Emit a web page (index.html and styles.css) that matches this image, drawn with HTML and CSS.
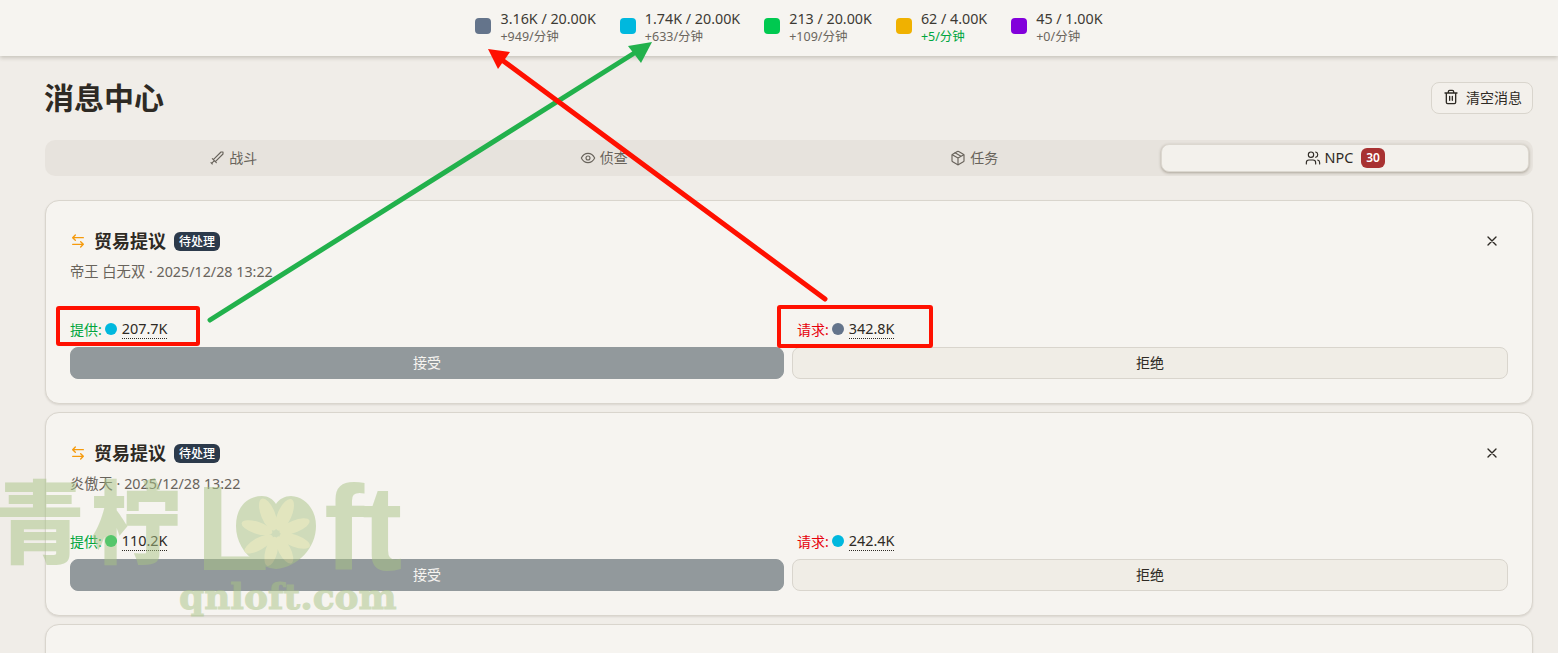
FILE: index.html
```html
<!DOCTYPE html>
<html lang="zh">
<head>
<meta charset="utf-8">
<title>消息中心</title>
<link rel="stylesheet" href="styles.css">
</head>
<body>
<div class="wrap">
	<header class="topbar">
		<div class="res">
			<i class="dot slate"></i>
			<div><p class="res-num">3.16K / 20.00K</p><p class="res-rate">+949/分钟</p></div>
		</div>
		<div class="res">
			<i class="dot cyan"></i>
			<div><p class="res-num">1.74K / 20.00K</p><p class="res-rate">+633/分钟</p></div>
		</div>
		<div class="res">
			<i class="dot green"></i>
			<div><p class="res-num">213 / 20.00K</p><p class="res-rate">+109/分钟</p></div>
		</div>
		<div class="res">
			<i class="dot amber"></i>
			<div><p class="res-num">62 / 4.00K</p><p class="res-rate up">+5/分钟</p></div>
		</div>
		<div class="res">
			<i class="dot purple"></i>
			<div><p class="res-num">45 / 1.00K</p><p class="res-rate">+0/分钟</p></div>
		</div>
	</header>

	<main class="page">
		<div class="page-head">
			<h1>消息中心</h1>
			<a href="" class="clear-btn">
				<svg class="ico" viewBox="0 0 24 24"><path d="M3 6h18M19 6v14a2 2 0 0 1-2 2H7a2 2 0 0 1-2-2V6M8 6V4a2 2 0 0 1 2-2h4a2 2 0 0 1 2 2v2M10 11v6M14 11v6"/></svg>
				清空消息
			</a>
		</div>

		<nav class="tabs">
			<a href="" class="tab">
				<svg class="ico-sm" viewBox="0 0 24 24"><g transform="matrix(-1 0 0 1 24 0)"><path d="M14.5 17.5 3 6V3h3l11.5 11.5M13 19l6-6M16 16l4 4M19 21l2-2"/></g></svg>
				战斗
			</a>
			<a href="" class="tab">
				<svg class="ico-sm" viewBox="0 0 24 24"><path d="M2 12s3.5-7 10-7 10 7 10 7-3.5 7-10 7-10-7-10-7Z"/><circle cx="12" cy="12" r="3"/></svg>
				侦查
			</a>
			<a href="" class="tab">
				<svg class="ico-sm" viewBox="0 0 24 24"><path d="M21 8a2 2 0 0 0-1-1.7l-7-4a2 2 0 0 0-2 0l-7 4A2 2 0 0 0 3 8v8a2 2 0 0 0 1 1.7l7 4a2 2 0 0 0 2 0l7-4a2 2 0 0 0 1-1.7Z"/><path d="m3.3 7 8.7 5 8.7-5M12 22V12M7.5 4.3l9 5.1"/></svg>
				任务
			</a>
			<a href="" class="tab active">
				<svg class="ico-sm" viewBox="0 0 24 24"><path d="M16 21v-2a4 4 0 0 0-4-4H6a4 4 0 0 0-4 4v2"/><circle cx="9" cy="7" r="4"/><path d="M22 21v-2a4 4 0 0 0-3-3.9M16 3.1a4 4 0 0 1 0 7.8"/></svg>
				NPC <span class="count">30</span>
			</a>
		</nav>

		<section class="card">
			<div class="card-top">
				<div>
					<h2>
						<svg class="swap" viewBox="0 0 24 24"><path d="M8 3 4 7l4 4M4 7h16M16 21l4-4-4-4M20 17H4"/></svg>
						贸易提议 <span class="tag">待处理</span>
					</h2>
					<p class="meta">帝王 白无双 · 2025/12/28 13:22</p>
				</div>
				<a href="" class="close"><svg class="ico" viewBox="0 0 24 24"><path d="M18 6 6 18M6 6l12 12"/></svg></a>
			</div>
			<div class="deal">
				<div class="side"><span class="give">提供:</span><i class="dot-sm cyan"></i><span class="amt">207.7K</span></div>
				<div class="side right"><span class="want">请求:</span><i class="dot-sm slate"></i><span class="amt">342.8K</span></div>
				<a href="" class="btn accept">接受</a>
				<a href="" class="btn">拒绝</a>
			</div>
		</section>

		<section class="card">
			<div class="card-top">
				<div>
					<h2>
						<svg class="swap" viewBox="0 0 24 24"><path d="M8 3 4 7l4 4M4 7h16M16 21l4-4-4-4M20 17H4"/></svg>
						贸易提议 <span class="tag">待处理</span>
					</h2>
					<p class="meta">炎傲天 · 2025/12/28 13:22</p>
				</div>
				<a href="" class="close"><svg class="ico" viewBox="0 0 24 24"><path d="M18 6 6 18M6 6l12 12"/></svg></a>
			</div>
			<div class="deal">
				<div class="side"><span class="give">提供:</span><i class="dot-sm green"></i><span class="amt">110.2K</span></div>
				<div class="side right"><span class="want">请求:</span><i class="dot-sm cyan"></i><span class="amt">242.4K</span></div>
				<a href="" class="btn accept">接受</a>
				<a href="" class="btn">拒绝</a>
			</div>
		</section>

		<section class="card"></section>
	</main>

	<!-- 스크린샷 위 주석 -->
	<svg class="marks" viewBox="0 0 1558 653">
		<rect x="58" y="308" width="140" height="36" rx="1" fill="none" stroke="#ff1000" stroke-width="4"/>
		<rect x="779" y="307" width="152" height="39" rx="1" fill="none" stroke="#ff1000" stroke-width="4"/>
		<path d="M210 320 636 52" stroke="#22b14c" stroke-width="5" stroke-linecap="round" fill="none"/>
		<path d="M652 42 628 46 641 63Z" fill="#22b14c"/>
		<path d="M825 299 502 60" stroke="#ff1000" stroke-width="5" stroke-linecap="round" fill="none"/>
		<path d="M488 49 510 52 498 69Z" fill="#ff1000"/>
	</svg>

	<!-- 워터마크 -->
	<div class="wm">
		<span class="wm-cn">青柠</span>
		<span class="wm-en">L<svg class="lemon" viewBox="0 0 82 76"><path d="M41 75C18 72 1 54 1 32 1 12 13 2 27 2c6 0 11 3 14 8 3-5 9-8 15-8 15 1 25 14 25 30 0 22-18 41-40 43Z" fill="#a9c486"/><g fill="#d0d88e"><ellipse cx="41" cy="19" rx="7" ry="17" transform="rotate(-22 41 40)"/><ellipse cx="41" cy="19" rx="7" ry="17" transform="rotate(24 41 40)"/><ellipse cx="41" cy="20" rx="6" ry="16" transform="rotate(68 41 40)"/><ellipse cx="41" cy="20" rx="6" ry="16" transform="rotate(110 41 40)"/><ellipse cx="41" cy="22" rx="6" ry="15" transform="rotate(152 41 40)"/><ellipse cx="41" cy="22" rx="6" ry="15" transform="rotate(195 41 40)"/><ellipse cx="41" cy="20" rx="6" ry="16" transform="rotate(240 41 40)"/><ellipse cx="41" cy="20" rx="6" ry="16" transform="rotate(288 41 40)"/></g></svg>ft</span>
		<span class="wm-url">qnloft.com</span>
	</div>
</div>
</body>
</html>
```

FILE: styles.css
```css
* {margin:0; padding:0; box-sizing:border-box}
html, body {height:100%; overflow:hidden}
body {font-family:"Noto Sans", "Noto Sans CJK SC", sans-serif; font-size:14px; color:#2e2a24; background-color:#f0ede8}
a {color:inherit; text-decoration:none}
i {display:block; flex:none}
.wrap {position:relative; height:653px; overflow:hidden}

.slate {background-color:#64748b}
.cyan {background-color:#00b8de}
.green {background-color:#00c950}
.amber {background-color:#f0b100}
.purple {background-color:#8200db}

.topbar {display:flex; justify-content:center; gap:24px; height:56px; padding:10px 0 0 20px; background-color:#f6f4f0; box-shadow:0 2px 4px rgba(60,50,30,.22)}
.res {display:flex; align-items:flex-start; gap:9px}
.dot {width:16px; height:16px; margin-top:8px; border-radius:4px}
.res-num {font-size:14.3px; line-height:17px; color:#3d3a34}
.res-rate {font-size:12.5px; line-height:16px; margin-top:2px; color:#6b665e}
.res-rate.up {color:#00a63e}

.page {padding:0 25px 0 45px}
.page-head {display:flex; justify-content:space-between; align-items:center; height:84px}
h1 {font-size:30px; line-height:36px; font-weight:700; color:#2e2a24; margin-left:-1px}
.clear-btn {display:flex; align-items:center; gap:7px; width:102px; height:32px; padding:0 0 2px 11px; font-size:14px; border:1px solid #d9d5cd; border-radius:8px; background-color:#f3f0eb}
.ico {width:16px; height:16px; fill:none; stroke:#2e2a24; stroke-width:2; stroke-linecap:round; stroke-linejoin:round}
.ico-sm {width:16px; height:16px; fill:none; stroke:currentColor; stroke-width:1.7; stroke-linecap:round; stroke-linejoin:round}

.tabs {display:grid; grid-template-columns:repeat(4, 1fr); gap:2px; height:36px; padding:4px; border-radius:10px; background-color:#e7e3dd}
.tab {display:flex; justify-content:center; align-items:center; gap:4px; height:28px; font-size:14px; line-height:26px; color:#68635b}
.tab.active {font-size:14.4px; color:#2e2a24; background-color:#f3f1ec; border:1px solid #dcd8d0; border-radius:8px; box-shadow:0 1px 3px rgba(60,50,30,.35)}
.count {margin-left:4px; padding:0 5px; font-size:12px; line-height:20px; font-weight:600; color:#fff; background-color:#a83232; border-radius:6px}

.card {height:204px; margin-top:8px; padding:24px; background-color:#f6f4f0; border:1px solid #d9d5cd; border-radius:14px; box-shadow:0 1px 2px rgba(60,50,30,.12)}
.tabs + .card {margin-top:24px}
.card-top {display:flex; justify-content:space-between; height:95px}
h2 {display:flex; align-items:center; height:32px; font-size:18px; line-height:32px; font-weight:700}
.swap {width:16px; height:16px; margin-right:8px; fill:none; stroke:#f59a0c; stroke-width:2; stroke-linecap:round; stroke-linejoin:round}
.tag {margin-left:8px; padding:0 5px; font-size:12px; line-height:19px; font-weight:500; color:#fff; background-color:#2c3a4b; border-radius:6px}
.meta {margin-top:5px; font-size:14.3px; line-height:20px; color:#68635b}
.close {display:block; width:16px; height:16px; margin:8px 8px 0 0}

.deal {display:grid; grid-template-columns:714px 1fr; column-gap:8px; row-gap:9px}
.side {display:flex; align-items:center; height:18px; font-size:14px}
.side.right {padding-left:5px}
.give {color:#00a63e}
.want {color:#e7000b}
.dot-sm {width:12px; height:12px; margin:0 5px 0 3px; border-radius:50%}
.amt {font-size:14.4px; line-height:18px; border-bottom:1px dotted #2e2a24}
.btn {display:flex; justify-content:center; align-items:center; height:32px; padding-bottom:2px; font-size:14px; background-color:#f0ede6; border:1px solid #d9d5cd; border-radius:8px}
.btn.accept {color:#f6f4f0; background-color:#92999c; border-color:#92999c}

.marks {position:absolute; left:0; top:0; width:1558px; height:653px}

.wm {position:absolute; left:0; top:474px; width:400px; height:150px; color:#a9c486; opacity:.5; pointer-events:none}
.wm-cn {position:absolute; left:-5px; top:-8px; font-size:90px; line-height:110px; font-weight:900; letter-spacing:6px}
.wm-en {position:absolute; left:196px; top:-1px; display:flex; align-items:baseline; font-family:"Liberation Sans", sans-serif; font-size:120px; line-height:110px; font-weight:700; letter-spacing:-2px}
.lemon {width:82px; height:76px; margin:0 7px 4px -32px}
.wm-url {position:absolute; left:179px; top:100px; font-family:"DejaVu Serif", serif; font-size:36px; line-height:44px; font-weight:700; -webkit-text-stroke:1px #a9c486}
```
